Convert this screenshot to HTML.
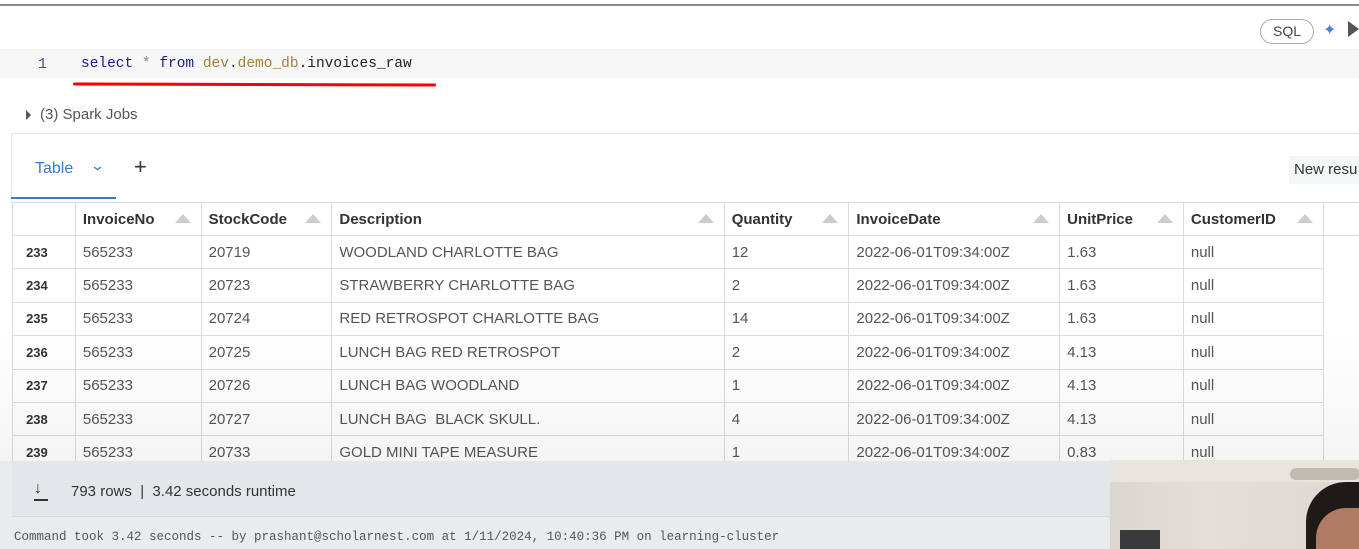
<!DOCTYPE html>
<html><head><meta charset="utf-8"><style>
*{margin:0;padding:0;box-sizing:border-box}
body{width:1359px;height:549px;overflow:hidden;background:#fff;position:relative;font-family:"Liberation Sans",sans-serif;color:#333}
.a{position:absolute}
table{border-collapse:collapse;table-layout:fixed;position:absolute;left:12px;top:202px}
td{height:33.4px;border:1px solid #dcdcdc;font-size:15px;color:#555;padding-left:7px;white-space:nowrap;overflow:hidden}
td.n{font-weight:bold;color:#333;font-size:13px;text-align:center;padding:0 14px 0 0}
tr.h td{font-weight:bold;color:#333;font-size:15px;height:33px}
.tri{float:right;margin-right:10px;margin-top:3px;width:0;height:0;border-left:8px solid transparent;border-right:8px solid transparent;border-bottom:9px solid #ccc}
</style></head><body>
<div class="a" style="left:0;top:4px;width:1359px;height:2px;background:#8a8a8a"></div>
<div class="a" style="left:0;top:49px;width:1359px;height:29px;background:#f6f6f6"></div>
<div class="a" style="left:38px;top:56px;font-family:'Liberation Mono',monospace;font-size:15px;color:#4a4a8a">1</div>
<div class="a" style="left:81px;top:56px;font-family:'Liberation Mono',monospace;font-size:14.5px;color:#222;white-space:pre"><span style="color:#1a1a8a">select</span> <span style="color:#888">*</span> <span style="color:#1a1a8a">from</span> <span style="color:#a08040">dev</span>.<span style="color:#a08040">demo_db</span>.invoices_raw</div>
<div class="a" style="left:73px;top:83px;width:363px;height:3px;background:#f00;border-radius:2px;transform:rotate(0.15deg)"></div>
<div class="a" style="left:1260px;top:19px;width:54px;height:25px;border:1px solid #aaa;border-radius:13px;font-size:14px;color:#444;text-align:center;line-height:23px">SQL</div>
<div class="a" style="left:1323px;top:20px;font-size:16px;color:#5b7de0">✦</div>
<div class="a" style="left:1348px;top:21px;width:0;height:0;border-top:8px solid transparent;border-bottom:8px solid transparent;border-left:11px solid #555"></div>
<div class="a" style="left:26px;top:110px;width:0;height:0;border-top:5px solid transparent;border-bottom:5px solid transparent;border-left:5px solid #555"></div>
<div class="a" style="left:40px;top:106px;font-size:15px;color:#555">(3) Spark Jobs</div>
<div class="a" style="left:11px;top:133px;width:1348px;height:1px;background:#e6e6e6"></div>
<div class="a" style="left:11px;top:133px;width:1px;height:70px;background:#e6e6e6"></div>
<div class="a" style="left:35px;top:160px;font-size:16px;color:#3b7ac7">Table</div>
<div class="a" style="left:92px;top:158px;font-size:13px;color:#3b7ac7;transform:scaleX(1.4)">⌄</div>
<div class="a" style="left:134px;top:154px;font-size:22px;color:#333">+</div>
<div class="a" style="left:11px;top:197px;width:105px;height:2px;background:#3b7ac7"></div>
<div class="a" style="left:1289px;top:156px;width:70px;height:28px;background:#f3f7f8;font-size:15px;color:#333;padding:5px 5px;white-space:nowrap;overflow:hidden">New resu</div>
<table>
<colgroup><col style="width:63px"><col style="width:126px"><col style="width:131px"><col style="width:393px"><col style="width:125px"><col style="width:211px"><col style="width:124px"><col style="width:140px"><col style="width:36px"></colgroup>
<tr class="h"><td></td><td>InvoiceNo<span class="tri"></span></td><td>StockCode<span class="tri"></span></td><td>Description<span class="tri"></span></td><td>Quantity<span class="tri"></span></td><td>InvoiceDate<span class="tri"></span></td><td>UnitPrice<span class="tri"></span></td><td>CustomerID<span class="tri"></span></td><td style="border-right:none"></td></tr>
<tr><td class="n">233</td><td>565233</td><td>20719</td><td>WOODLAND CHARLOTTE BAG</td><td>12</td><td>2022-06-01T09:34:00Z</td><td>1.63</td><td>null</td><td style="border:none"></td></tr>
<tr><td class="n">234</td><td>565233</td><td>20723</td><td>STRAWBERRY CHARLOTTE BAG</td><td>2</td><td>2022-06-01T09:34:00Z</td><td>1.63</td><td>null</td><td style="border:none"></td></tr>
<tr><td class="n">235</td><td>565233</td><td>20724</td><td>RED RETROSPOT CHARLOTTE BAG</td><td>14</td><td>2022-06-01T09:34:00Z</td><td>1.63</td><td>null</td><td style="border:none"></td></tr>
<tr><td class="n">236</td><td>565233</td><td>20725</td><td>LUNCH BAG RED RETROSPOT</td><td>2</td><td>2022-06-01T09:34:00Z</td><td>4.13</td><td>null</td><td style="border:none"></td></tr>
<tr><td class="n">237</td><td>565233</td><td>20726</td><td>LUNCH BAG WOODLAND</td><td>1</td><td>2022-06-01T09:34:00Z</td><td>4.13</td><td>null</td><td style="border:none"></td></tr>
<tr><td class="n">238</td><td>565233</td><td>20727</td><td>LUNCH BAG&nbsp; BLACK SKULL.</td><td>4</td><td>2022-06-01T09:34:00Z</td><td>4.13</td><td>null</td><td style="border:none"></td></tr>
<tr><td class="n">239</td><td>565233</td><td>20733</td><td>GOLD MINI TAPE MEASURE</td><td>1</td><td>2022-06-01T09:34:00Z</td><td>0.83</td><td>null</td><td style="border:none"></td></tr>
</table>
<div class="a" style="left:0;top:330px;width:1359px;height:219px;background:linear-gradient(rgba(0,0,0,0),rgba(0,0,0,0.07))"></div>
<div class="a" style="left:0;top:461px;width:1359px;height:88px;background:#e9ebec"></div>
<div class="a" style="left:12px;top:461px;width:1347px;height:56px;background:#e2e8ea;border-bottom:1px solid #d4d8da"></div>
<div class="a" style="left:34px;top:480px;font-size:16px;color:#333">↓</div>
<div class="a" style="left:34px;top:499px;width:14px;height:2px;background:#333"></div>
<div class="a" style="left:71px;top:483px;font-size:15px;color:#333">793 rows &nbsp;|&nbsp; 3.42 seconds runtime</div>
<div class="a" style="left:14px;top:530px;font-family:'Liberation Mono',monospace;font-size:12.5px;color:#555">Command took 3.42 seconds -- by prashant@scholarnest.com at 1/11/2024, 10:40:36 PM on learning-cluster</div>
<div class="a" style="left:1110px;top:460px;width:249px;height:89px;background:linear-gradient(90deg,#d9d5cf 0%,#e3dfd9 40%,#ddd8d0 100%);overflow:hidden">
<div class="a" style="left:0;top:0;width:249px;height:22px;background:#e8e4de"></div>
<div class="a" style="left:10px;top:70px;width:40px;height:19px;background:#3a3a3a"></div>
<div class="a" style="left:180px;top:8px;width:70px;height:12px;background:#9a9088;border-radius:6px;opacity:.5"></div>
<div class="a" style="left:196px;top:22px;width:70px;height:90px;background:#1e1a18;border-radius:40px 0 0 0"></div>
<div class="a" style="left:206px;top:48px;width:60px;height:60px;background:#b07a64;border-radius:30px 0 0 0"></div>
</div>
</body></html>
